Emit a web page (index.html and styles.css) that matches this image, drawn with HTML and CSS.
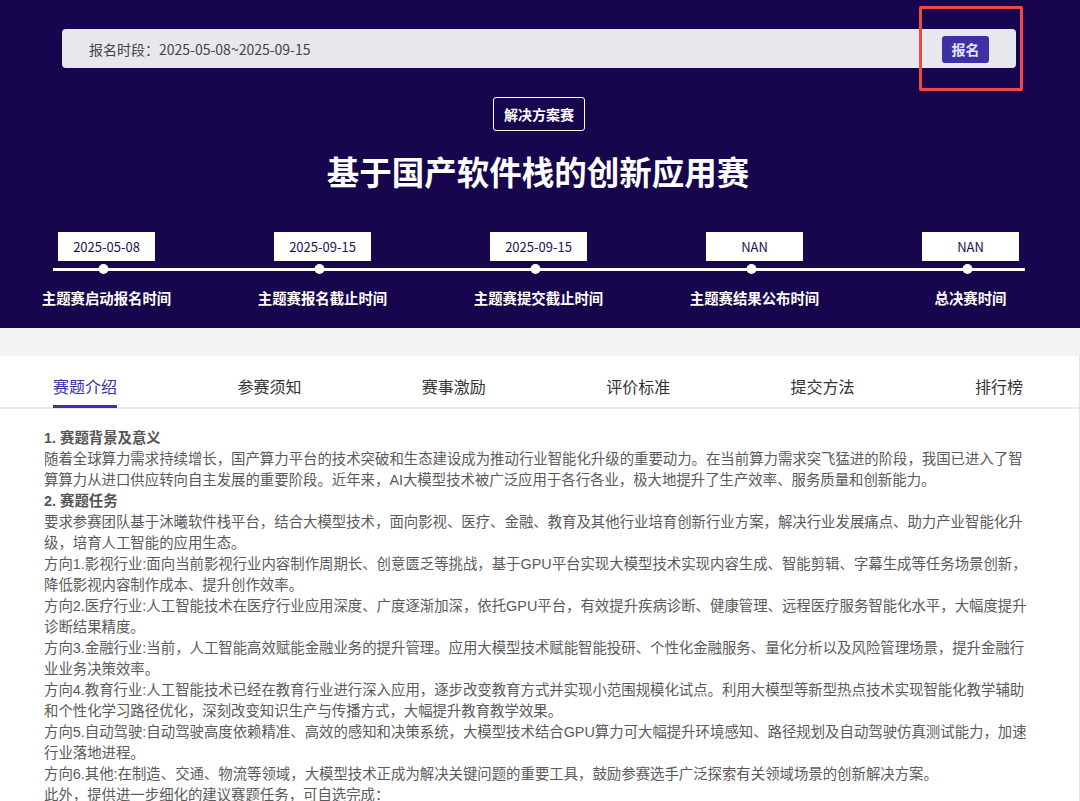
FILE: index.html
```html
<!DOCTYPE html>
<html lang="zh-CN">
<head>
<meta charset="utf-8">
<title>基于国产软件栈的创新应用赛</title>
<link rel="stylesheet" href="styles.css">
</head>
<body>
<header class="hero">
  <div class="signup-bar">
    <span class="signup-text">报名时段：2025-05-08~2025-09-15</span>
    <button class="signup-btn">报名</button>
  </div>
  <div class="highlight-box"></div>
  <div class="tag">解决方案赛</div>
  <h1 class="title">基于国产软件栈的创新应用赛</h1>
  <div class="timeline">
    <div class="tl-item"><div class="tl-date">2025-05-08</div><span class="tl-dot"></span><div class="tl-label">主题赛启动报名时间</div></div>
    <div class="tl-item"><div class="tl-date">2025-09-15</div><span class="tl-dot"></span><div class="tl-label">主题赛报名截止时间</div></div>
    <div class="tl-item"><div class="tl-date">2025-09-15</div><span class="tl-dot"></span><div class="tl-label">主题赛提交截止时间</div></div>
    <div class="tl-item"><div class="tl-date">NAN</div><span class="tl-dot"></span><div class="tl-label">主题赛结果公布时间</div></div>
    <div class="tl-item"><div class="tl-date">NAN</div><span class="tl-dot"></span><div class="tl-label">总决赛时间</div></div>
  </div>
</header>
<div class="band"></div>
<main class="card">
  <nav class="tabs">
    <a class="tab active">赛题介绍</a>
    <a class="tab">参赛须知</a>
    <a class="tab">赛事激励</a>
    <a class="tab">评价标准</a>
    <a class="tab">提交方法</a>
    <a class="tab">排行榜</a>
  </nav>
  <section class="content">
    <p class="h">1. 赛题背景及意义</p>
    <p>随着全球算力需求持续增长，国产算力平台的技术突破和生态建设成为推动行业智能化升级的重要动力。在当前算力需求突飞猛进的阶段，我国已进入了智算算力从进口供应转向自主发展的重要阶段。近年来，AI大模型技术被广泛应用于各行各业，极大地提升了生产效率、服务质量和创新能力。</p>
    <p class="h">2. 赛题任务</p>
    <p>要求参赛团队基于沐曦软件栈平台，结合大模型技术，面向影视、医疗、金融、教育及其他行业培育创新行业方案，解决行业发展痛点、助力产业智能化升级，培育人工智能的应用生态。</p>
    <p>方向1.影视行业:面向当前影视行业内容制作周期长、创意匮乏等挑战，基于GPU平台实现大模型技术实现内容生成、智能剪辑、字幕生成等任务场景创新，降低影视内容制作成本、提升创作效率。</p>
    <p>方向2.医疗行业:人工智能技术在医疗行业应用深度、广度逐渐加深，依托GPU平台，有效提升疾病诊断、健康管理、远程医疗服务智能化水平，大幅度提升诊断结果精度。</p>
    <p>方向3.金融行业:当前，人工智能高效赋能金融业务的提升管理。应用大模型技术赋能智能投研、个性化金融服务、量化分析以及风险管理场景，提升金融行业业务决策效率。</p>
    <p>方向4.教育行业:人工智能技术已经在教育行业进行深入应用，逐步改变教育方式并实现小范围规模化试点。利用大模型等新型热点技术实现智能化教学辅助和个性化学习路径优化，深刻改变知识生产与传播方式，大幅提升教育教学效果。</p>
    <p>方向5.自动驾驶:自动驾驶高度依赖精准、高效的感知和决策系统，大模型技术结合GPU算力可大幅提升环境感知、路径规划及自动驾驶仿真测试能力，加速行业落地进程。</p>
    <p>方向6.其他:在制造、交通、物流等领域，大模型技术正成为解决关键问题的重要工具，鼓励参赛选手广泛探索有关领域场景的创新解决方案。</p>
    <p>此外，提供进一步细化的建议赛题任务，可自选完成：</p>
  </section>
</main>
</body>
</html>
```
FILE: styles.css
```css
html { scrollbar-width: none; }
html::-webkit-scrollbar { display: none; }
* { box-sizing: border-box; }
body {
  margin: 0;
  background: #f3f3f3;
  font-family: "Noto Sans CJK SC", "Noto Sans", sans-serif;
}
.hero {
  position: relative;
  background: #17054e;
  padding: 29px 0 20px;
  display: flex;
  flex-direction: column;
  align-items: center;
}
.signup-bar {
  align-self: flex-start;
  margin-left: 62px;
  width: 954px;
  height: 39px;
  background: #e8e7ee;
  border-radius: 4px;
  display: flex;
  align-items: center;
  justify-content: space-between;
  padding: 0 27px;
}
.signup-text {
  font-size: 14px;
  color: #444;
}
.signup-btn {
  font-family: inherit;
  border: 0;
  background: #3c31a4;
  color: #e6e4f3;
  font-size: 14px;
  font-weight: 700;
  height: 27px;
  width: 47px;
  padding: 0;
  border-radius: 3px;
  margin-top: 1px;
}
.highlight-box {
  position: absolute;
  left: 919px;
  top: 6px;
  width: 104px;
  height: 85px;
  border: 3px solid #ee4848;
  border-radius: 2px;
}
.tag {
  margin-top: 29px;
  margin-right: 2px;
  height: 34px;
  padding: 0 10px;
  border: 1px solid #fff;
  border-radius: 3px;
  color: #fff;
  font-size: 14px;
  font-weight: 700;
  line-height: 32px;
}
.title {
  margin: 18px 0 0;
  font-size: 32.5px;
  line-height: 44px;
  font-weight: 700;
  color: #fff;
  padding-right: 4px;
}
.timeline {
  position: relative;
  align-self: flex-start;
  margin: 39px 0 0 -1.5px;
  display: grid;
  grid-template-columns: repeat(5, 216px);
}
.timeline::before {
  content: "";
  position: absolute;
  left: 54.5px;
  width: 972px;
  top: 35.5px;
  height: 3px;
  background: #fff;
}
.tl-item {
  display: flex;
  flex-direction: column;
  align-items: center;
}
.tl-date {
  width: 97px;
  height: 29px;
  background: #fff;
  color: #1b1150;
  font-size: 13px;
  line-height: 29px;
  text-align: center;
}
.tl-dot {
  position: relative;
  width: 10px;
  height: 10px;
  border-radius: 50%;
  background: #fff;
  margin-top: 3px;
  transform: translateX(-3.5px);
}
.tl-label {
  margin-top: 14px;
  color: #fff;
  font-size: 14.4px;
  font-weight: 700;
  line-height: 20px;
}
.band { height: 28px; }
.card {
  background: #fff;
  border-right: 1px solid #e4e4e4;
  min-height: 445px;
}
.tabs {
  display: flex;
  justify-content: space-between;
  padding: 19px 56px 0 53px;
  border-bottom: 2px solid #e8e8e8;
}
.tab {
  font-size: 16px;
  line-height: 22px;
  color: #333;
  padding-bottom: 8px;
  border-bottom: 3px solid transparent;
  margin-bottom: -1px;
}
.tab.active {
  color: #3b32a6;
  border-bottom-color: #3b32a6;
}
.content {
  padding: 19px 44px 0;
  font-family: "Liberation Sans", "Noto Sans CJK SC", sans-serif;
  font-size: 14.4px;
  line-height: 21px;
  color: #5a5a5a;
}
.content p { margin: 0; }
.content .h { font-weight: 700; color: #555; }
```
